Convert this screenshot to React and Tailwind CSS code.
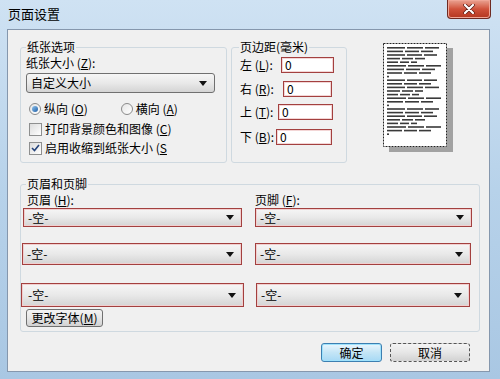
import React from 'react';

const Key = ({ k, close = true }) => (
  <span>
    (<span className="underline">{k}</span>
    {close && ')'}
  </span>
);

const Arrow = () => (
  <svg width="8" height="5" viewBox="0 0 8 5" className="shrink-0">
    <path d="M0 0 H8 L4 5 Z" fill="#111" />
  </svg>
);

const Select = ({ value, className = '' }) => (
  <div
    className={`flex items-center justify-between bg-gradient-to-b from-[#f6f6f6] via-[#e9e9e9] to-[#d4d4d4] pl-[4px] pr-[7px] leading-[14px] ${className}`}
  >
    <span>{value}</span>
    <Arrow />
  </div>
);

const RedSelect = ({ className = '' }) => (
  <Select
    value="-空-"
    className={`border border-[#a3403f] shadow-[inset_0_0_0_1px_#f1cfcf] ${className}`}
  />
);

const GroupBox = ({ label, legendClass = 'ml-[5px]', className = '', children }) => (
  <fieldset className={`shrink-0 rounded-[3px] border border-[#cfd9e0] ${className}`}>
    <legend className={`${legendClass} px-[1px] leading-[16px]`}>{label}</legend>
    {children}
  </fieldset>
);

const PagePreview = () => {
  const blocks = [
    [52, 46, 50, 38, 30, 54, 48, 44],
    [50, 44, 52, 36, 32, 54, 46],
    [52, 46, 50, 38, 30, 54, 44],
  ];
  const lines = [];
  let y = 4;
  blocks.forEach((block, b) => {
    block.forEach((w, i) => {
      // split each line into a few word-like segments
      let x = 4;
      const segs = [Math.round(w * 0.35), Math.round(w * 0.3), w - Math.round(w * 0.35) - Math.round(w * 0.3) - 4];
      segs.forEach((s, j) => {
        if (s > 0) lines.push(<rect key={`${b}-${i}-${j}`} x={x} y={y} width={s} height="1.6" fill="#3a3a3a" />);
        x += s + 2;
      });
      y += 3.6;
    });
    lines.push(<rect key={`${b}-dot`} x="4" y={y} width="2" height="1.6" fill="#3a3a3a" />);
    y += 3.6;
  });
  return (
    <div className="h-[104px] w-[64px] shrink-0 bg-white shadow-[6px_5px_0_#a2a2a2]">
      <svg width="64" height="104" viewBox="0 0 64 104">
        <rect x="0.5" y="0.5" width="63" height="103" fill="none" stroke="#222" strokeDasharray="2 1" />
        {lines}
      </svg>
    </div>
  );
};

const Radio = ({ checked }) => (
  <span className="flex h-[12px] w-[12px] shrink-0 items-center justify-center rounded-full border border-[#8a8a8a] bg-gradient-to-br from-[#e6e6e6] to-white">
    {checked && <span className="h-[6px] w-[6px] rounded-full bg-gradient-to-br from-[#8fc4ee] to-[#1f5fa5]" />}
  </span>
);

const Checkbox = ({ checked }) => (
  <span className="flex h-[13px] w-[13px] shrink-0 items-center justify-center border border-[#8e8f8f] bg-gradient-to-br from-[#dcdcdc] to-white">
    {checked && (
      <svg width="9" height="8" viewBox="0 0 9 8">
        <path d="M1 4 L3.5 6.5 L8 1" fill="none" stroke="#25437a" strokeWidth="1.6" />
      </svg>
    )}
  </span>
);

const marginRows = [
  { label: '左', k: 'L', rowClass: 'mt-[2px]', labelClass: 'w-[41px]', inputClass: 'w-[53px]' },
  { label: '右', k: 'R', rowClass: 'mt-[8px]', labelClass: 'w-[43px]', inputClass: 'w-[49px]' },
  { label: '上', k: 'T', rowClass: 'mt-[7px]', labelClass: 'w-[38px]', inputClass: 'w-[55px]' },
  { label: '下', k: 'B', rowClass: 'mt-[9px]', labelClass: 'w-[36px]', inputClass: 'w-[56px]' },
];

export default function App() {
  return (
    <div className="h-[379px] w-[500px] overflow-hidden bg-gradient-to-b from-[#cfe2f3] via-[#b7d2ea] to-[#a9c7e3] font-['Noto_Sans_CJK_SC',sans-serif] text-[12px] text-black">
      {/* title bar */}
      <div className="flex h-[29px] items-start justify-between pl-[8px] pr-[9px]">
        <span className="mt-[6px] text-[13px] leading-[16px]">页面设置</span>
        <button className="flex h-[19px] w-[44px] items-center justify-center rounded-b-[4px] border border-t-0 border-[#6e2a22] bg-gradient-to-b from-[#e9a392] via-[#d0523b] to-[#b3361f] shadow-[inset_0_0_0_1px_#f0a696]">
          <svg width="12" height="10" viewBox="0 0 12 10">
            <path d="M2 1 L10 9 M10 1 L2 9" stroke="#5a1a12" strokeWidth="3.6" strokeLinecap="round" />
            <path d="M2 1 L10 9 M10 1 L2 9" stroke="#fff" strokeWidth="2.2" strokeLinecap="round" />
          </svg>
        </button>
      </div>

      {/* client area */}
      <div className="ml-[7px] h-[343px] w-[483px] border border-[#8597ad] bg-[#f0f0f0] pl-[12px] pt-[9px]">
        <div className="flex items-start">
          <GroupBox label="纸张选项" className="h-[124px] w-[207px]">
            <div className="pl-[5px] leading-[16px]">
              纸张大小 <Key k="Z" />:
            </div>
            <Select
              value="自定义大小"
              className="ml-[5px] mt-[2px] h-[20px] w-[189px] rounded-[3px] border border-[#707070]"
            />
            <div className="ml-[8px] mt-[8px] flex h-[16px] items-center">
              <Radio checked />
              <span className="ml-[3px] leading-[16px]">
                纵向 <Key k="O" />
              </span>
              <span className="ml-[33px]">
                <Radio />
              </span>
              <span className="ml-[3px] leading-[16px]">
                横向 <Key k="A" />
              </span>
            </div>
            <div className="ml-[8px] mt-[4px] flex h-[16px] items-center">
              <Checkbox />
              <span className="ml-[3px] leading-[16px]">
                打印背景颜色和图像 <Key k="C" />
              </span>
            </div>
            <div className="ml-[8px] mt-[3px] flex h-[16px] items-center">
              <Checkbox checked />
              <span className="ml-[3px] whitespace-nowrap leading-[16px]">
                启用收缩到纸张大小 <Key k="S" close={false} />
              </span>
            </div>
          </GroupBox>

          <GroupBox label="页边距(毫米)" legendClass="ml-[7px]" className="ml-[4px] h-[124px] w-[116px]">
            {marginRows.map((r) => (
              <div key={r.k} className={`ml-[8px] flex h-[16px] items-center ${r.rowClass}`}>
                <span className={`shrink-0 whitespace-nowrap leading-[16px] ${r.labelClass}`}>
                  {r.label} <Key k={r.k} />:
                </span>
                <span
                  className={`flex h-[16px] shrink-0 items-center border border-[#a3403f] bg-white pl-[3px] leading-[14px] shadow-[inset_0_0_0_1px_#f3d6d6] ${r.inputClass}`}
                >
                  0
                </span>
              </div>
            ))}
          </GroupBox>

          <div className="ml-[36px] mt-[4px]">
            <PagePreview />
          </div>
        </div>

        <GroupBox label="页眉和页脚" className="mt-[13px] h-[156px] w-[460px]">
          <div className="flex h-[16px] leading-[16px]">
            <span className="ml-[6px] w-[228px]">
              页眉 <Key k="H" />:
            </span>
            <span>
              页脚 <Key k="F" />:
            </span>
          </div>
          <div className="flex">
            <RedSelect className="ml-[2px] h-[19px] w-[219px]" />
            <RedSelect className="ml-[13px] h-[19px] w-[217px]" />
          </div>
          <div className="mt-[16px] flex">
            <RedSelect className="ml-[1px] h-[22px] w-[220px]" />
            <RedSelect className="ml-[13px] h-[22px] w-[216px]" />
          </div>
          <div className="mt-[18px] flex">
            <RedSelect className="h-[24px] w-[223px] pl-[6px]" />
            <RedSelect className="ml-[12px] h-[24px] w-[214px]" />
          </div>
          <button className="ml-[5px] mt-[2px] flex h-[18px] w-[77px] items-center justify-center rounded-[3px] border border-[#707070] bg-gradient-to-b from-[#f4f4f4] via-[#e6e6e6] to-[#d2d2d2] leading-[14px]">
            更改字体 <Key k="M" />
          </button>
        </GroupBox>

        <div className="mt-[11px] flex justify-end pr-[19px]">
          <button className="flex h-[19px] w-[61px] items-center justify-center rounded-[3px] border border-[#3c7fb1] bg-gradient-to-b from-[#eaf6fd] via-[#c4e5f6] to-[#a7d9f5] leading-[14px] shadow-[inset_0_0_0_1px_#9fe2fc]">
            确定
          </button>
          <button className="ml-[8px] flex h-[19px] w-[80px] items-center justify-center rounded-[3px] border border-dashed border-[#555] bg-gradient-to-b from-[#f4f4f4] via-[#e6e6e6] to-[#d2d2d2] leading-[14px]">
            取消
          </button>
        </div>
      </div>
    </div>
  );
}
